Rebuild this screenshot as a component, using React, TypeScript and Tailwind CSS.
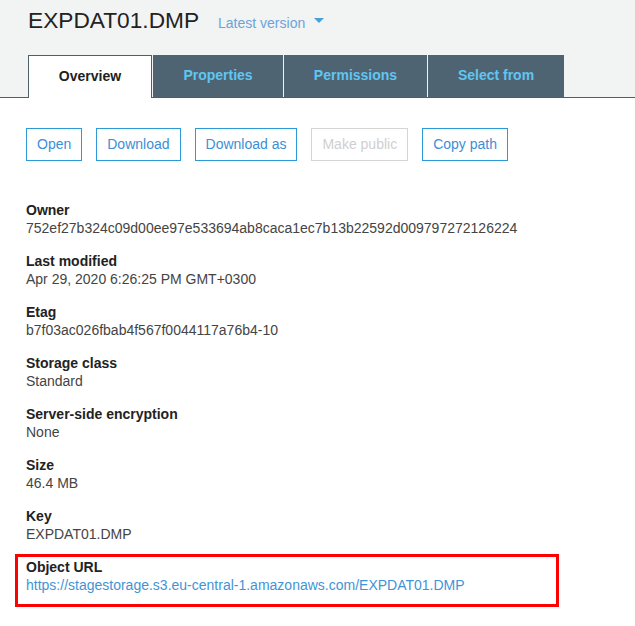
const tabs = [
  { label: "Properties", w: "w-[130px]" },
  { label: "Permissions", w: "w-[143px]" },
  { label: "Select from", w: "w-[136px]" },
];

const buttons = [
  { label: "Open", disabled: false },
  { label: "Download", disabled: false },
  { label: "Download as", disabled: false },
  { label: "Make public", disabled: true },
  { label: "Copy path", disabled: false },
];

const details = [
  { label: "Owner", value: "752ef27b324c09d00ee97e533694ab8caca1ec7b13b22592d009797272126224" },
  { label: "Last modified", value: "Apr 29, 2020 6:26:25 PM GMT+0300" },
  { label: "Etag", value: "b7f03ac026fbab4f567f0044117a76b4-10" },
  { label: "Storage class", value: "Standard" },
  { label: "Server-side encryption", value: "None" },
  { label: "Size", value: "46.4 MB" },
  { label: "Key", value: "EXPDAT01.DMP" },
];

export default function App() {
  return (
    <div className="w-[635px] h-[626px] overflow-hidden bg-white font-['Liberation_Sans',Arial,sans-serif]">
      {/* Header */}
      <div className="h-[98px] bg-[#f2f3f3] border-b border-[#4b5f6c] pl-[28px] pt-[5px] flex flex-col">
        <div className="flex items-baseline h-[30px] leading-[30px]">
          <h1 className="text-[22.7px] text-[#222]">EXPDAT01.DMP</h1>
          <span className="ml-[19px] text-[14px] text-[#6aa5d8]">Latest version</span>
          <svg width="10" height="6" viewBox="0 0 10 6" className="ml-[9px] self-center mt-[2px]">
            <path d="M0 0h10L5 5z" fill="#4a9ed9" />
          </svg>
        </div>
        <div className="flex mt-auto gap-px -mb-px">
          <div className="w-[124px] h-[43px] pb-px bg-white border border-b-0 border-[#4b5f6c] flex items-center justify-center text-[14px] font-bold text-[#222]">
            Overview
          </div>
          {tabs.map((t) => (
            <div
              key={t.label}
              className={`${t.w} h-[42px] pb-[2px] bg-[#4f6473] flex items-center justify-center text-[14px] font-bold text-[#5fc6f2]`}
            >
              {t.label}
            </div>
          ))}
        </div>
      </div>

      <div className="pl-[26px]">
        {/* Actions */}
        <div className="flex gap-[14px] mt-[30px]">
          {buttons.map((b) => (
            <button
              key={b.label}
              className={`h-[33px] px-[10px] border text-[14px] ${
                b.disabled ? "border-[#d5d5d5] text-[#cfcfcf]" : "border-[#2d9ad8] text-[#3b8fd6]"
              }`}
            >
              {b.label}
            </button>
          ))}
        </div>

        {/* Details */}
        <div className="mt-[40px] flex flex-col gap-[15px] text-[14px] leading-[18px]">
          {details.map((d) => (
            <div key={d.label}>
              <div className="font-bold text-[#222]">{d.label}</div>
              <div className="text-[#444]">{d.value}</div>
            </div>
          ))}
        </div>

        <div className="mt-[11px] -ml-[11px] w-[544px] border-[3px] border-[#ff0000] pl-[8px] pt-px pb-[10px] text-[14px] leading-[18px]">
          <div className="font-bold text-[#222]">Object URL</div>
          <a className="text-[#3f94d6]">https://stagestorage.s3.eu-central-1.amazonaws.com/EXPDAT01.DMP</a>
        </div>
      </div>
    </div>
  );
}
